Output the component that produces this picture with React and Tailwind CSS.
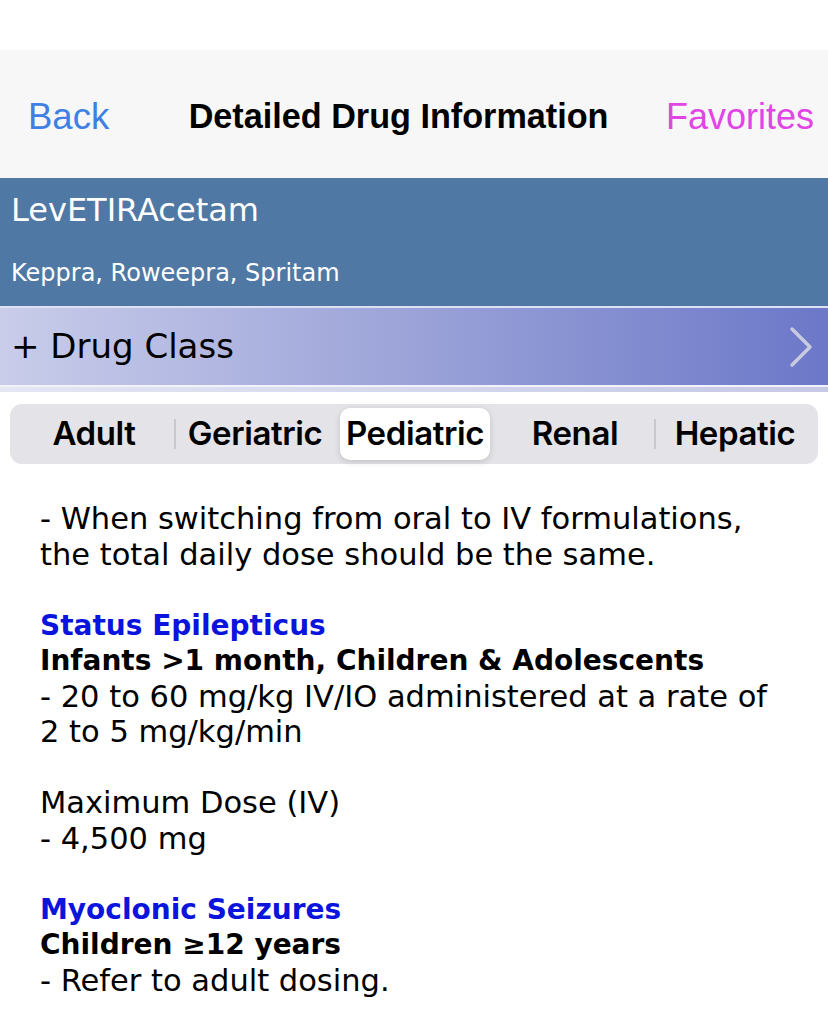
import React from "react";

const verdana = { fontFamily: '"DejaVu Sans", Verdana, sans-serif' };

export default function App() {
  const tabs = ["Adult", "Geriatric", "Pediatric", "Renal", "Hepatic"];
  return (
    <div className="w-[828px] h-[1028px] bg-white overflow-hidden">
      <div className="h-[50px] bg-white" />
      <div
        className="h-[128px] bg-[#f7f7f7] flex items-center justify-between pl-[28px] pr-[14px] pt-[6px]"
        style={{ fontFamily: '"Liberation Sans", Arial, sans-serif' }}
      >
        <span className="text-[36.5px] text-[#3f80e4]">Back</span>
        <span className="text-[34.2px] font-bold text-black ml-[22px]">Detailed Drug Information</span>
        <span className="text-[36px] text-[#e145e6]">Favorites</span>
      </div>
      <div className="h-[128px] bg-[#4f79a4] text-white pl-[11px] flex flex-col" style={verdana}>
        <div className="text-[32px] leading-none mt-[16px]">LevETIRAcetam</div>
        <div className="text-[24px] leading-none mt-[35px]">Keppra, Roweepra, Spritam</div>
      </div>
      <div className="h-[2px] bg-[#dde0f2]" />
      <div className="h-[77px] bg-gradient-to-r from-[#c9cdea] via-[#9ba3d8] to-[#6c78c8] flex items-center justify-between pl-[11px] pr-[14px]" style={verdana}>
        <span className="text-[34px] text-black">+ Drug Class</span>
        <svg width="26" height="42" viewBox="0 0 26 42">
          <path d="M4 3 L22 21 L4 39" fill="none" stroke="#c9cbe0" strokeWidth="3.5" strokeLinecap="round" strokeLinejoin="round" />
        </svg>
      </div>
      <div className="h-[2px] bg-[#f2f3fa]" />
      <div className="h-[5px] bg-gradient-to-r from-[#e4e6f4] to-[#c5c9e6]" />
      <div className="px-[10px] pt-[12px]">
        <div
          className="h-[60px] bg-[#e3e3e8] rounded-[12px] flex items-center px-[4px]"
          style={{ fontFamily: 'Inter, "Liberation Sans", sans-serif' }}
        >
          {tabs.map((t, i) => {
            const sel = t === "Pediatric";
            const showSep = i === 1 || i === 4;
            return (
              <div key={t} className="flex-1 h-[52px] flex items-center relative">
                {i > 0 && (
                  <div className={`w-[2px] h-[30px] ${showSep ? "bg-[#c7c7cc]" : "bg-transparent"}`} />
                )}
                <div
                  className={`flex-1 mx-[4px] h-[52px] flex items-center justify-center rounded-[10px] text-[33px] font-semibold text-black tracking-[-0.4px] ${
                    sel ? "bg-white shadow-[0_2px_6px_rgba(0,0,0,0.15)]" : ""
                  }`}
                >
                  {t}
                </div>
              </div>
            );
          })}
        </div>
      </div>
      <div className="pl-[40px] pr-[10px] pt-[37px] text-[30.5px] leading-[35.5px] text-black whitespace-nowrap" style={verdana}>
        <div>- When switching from oral to IV formulations,</div>
        <div>the total daily dose should be the same.</div>
        <div className="h-[35.5px]" />
        <div className="font-bold text-[28px] text-[#0a14dc]">Status Epilepticus</div>
        <div className="font-bold text-[28px]">Infants &gt;1 month, Children &amp; Adolescents</div>
        <div>- 20 to 60 mg/kg IV/IO administered at a rate of</div>
        <div>2 to 5 mg/kg/min</div>
        <div className="h-[35.5px]" />
        <div>Maximum Dose (IV)</div>
        <div>- 4,500 mg</div>
        <div className="h-[35.5px]" />
        <div className="font-bold text-[28px] text-[#0a14dc]">Myoclonic Seizures</div>
        <div className="font-bold text-[28px]">Children ≥12 years</div>
        <div>- Refer to adult dosing.</div>
      </div>
    </div>
  );
}
